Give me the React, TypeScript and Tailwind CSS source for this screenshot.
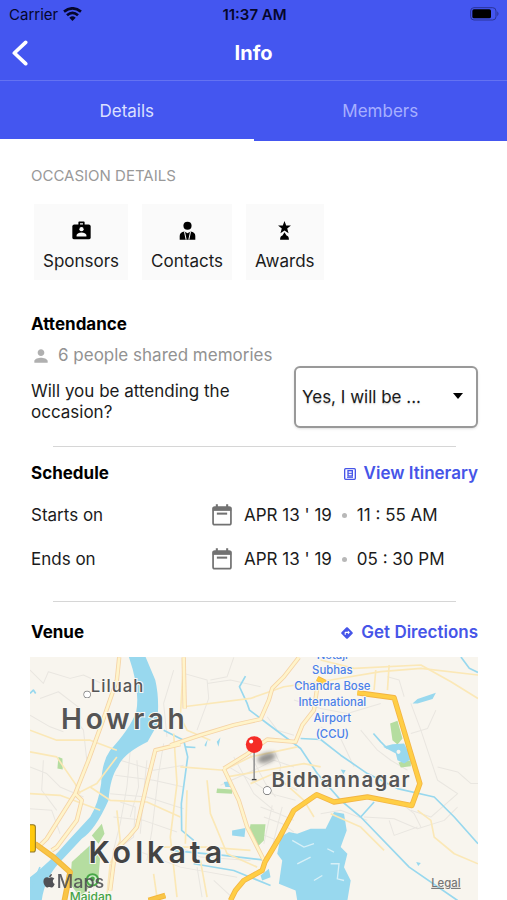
import type { ReactNode } from 'react';
import { MdDirections, MdPerson } from 'react-icons/md';
import { FaApple } from 'react-icons/fa';

const WifiIcon = () => (
  <svg viewBox="0 0 57 42" className="h-[14px] w-[19px]" fill="none" stroke="#05062b" strokeWidth="8" aria-hidden="true">
    <path d="M3 14Q28.500 -6 54 14" />
    <path d="M12 25Q28.500 10 45 25" />
    <path d="M19 32Q28.500 24 38 32L28.500 42Z" fill="#05062b" stroke="none" />
  </svg>
);

const BatteryIcon = () => (
  <svg viewBox="0 0 90 42" className="h-[14px] w-[30px]" aria-hidden="true">
    <rect x="2" y="2" width="76" height="37" rx="10" fill="none" stroke="#2a3499" strokeWidth="3" />
    <rect x="7" y="7" width="56" height="27" rx="5" fill="#000" />
    <path d="M82 13 Q89 20 82 28 Z" fill="#2a3499" />
  </svg>
);

const SponsorIcon = () => (
  <svg viewBox="0 0 58 56" className="h-[19px] w-[19px]" aria-hidden="true">
    <path d="M22 12V3H36V12" fill="none" stroke="#000" strokeWidth="5" strokeLinejoin="round" />
    <rect x="1" y="10" width="56" height="45" rx="6" />
    <circle cx="29" cy="24" r="6.500" fill="#fafafa" />
    <path d="M14 46V42Q17 34 29 34T44 42V46Z" fill="#fafafa" />
  </svg>
);

const ContactIcon = () => (
  <svg viewBox="0 0 56 56" className="h-[19px] w-[19px]" aria-hidden="true">
    <circle cx="28" cy="14" r="12" />
    <path d="M5 55V44Q5 33 19 31L28 36L37 31Q51 33 51 44V55Z" />
    <path d="M19 31L24 55M37 31L32 55" stroke="#fafafa" strokeWidth="3" />
  </svg>
);

const AwardIcon = () => (
  <svg viewBox="0 0 56 56" className="h-[19px] w-[19px]" aria-hidden="true">
    <path d="M28 0L33 13H47L36 22L40 36L28 28L16 36L20 22L9 13H23Z" />
    <path d="M28 33L34 43Q41 44 41 55H15Q15 44 22 43Z" />
  </svg>
);

const CalendarIcon = () => (
  <svg viewBox="0 0 58 64" className="h-[22px] w-[20px]" fill="none" stroke="#727272" aria-hidden="true">
    <rect x="3" y="9" width="52" height="51" rx="5" strokeWidth="5" />
    <path d="M2 15H56" strokeWidth="10" />
    <path d="M14 1V12M44 1V12" strokeWidth="6" />
    <path d="M14 28H44" strokeWidth="6" />
  </svg>
);

const ItineraryIcon = () => (
  <svg viewBox="0 0 36 36" className="h-3 w-3" fill="none" stroke="#4655e8" aria-hidden="true">
    <rect x="2" y="2" width="32" height="32" rx="3" strokeWidth="4" />
    <rect x="12" y="8" width="13" height="16" strokeWidth="4" />
    <path d="M12 16H25M9 28H27" strokeWidth="3" />
  </svg>
);

const minorRoads = [
  'M30 60L70 100L85 65L150 85L190 75L240 98M60 145L115 125L180 175M30 195L90 230L130 245',
  'M30 350L80 370L120 410L190 440M70 330L65 420L110 480M30 475L95 480L120 550M160 200L190 240L200 330',
  'M300 330L400 360L490 345M285 375L400 390L490 410M270 430L380 440L490 475M280 500L370 510L470 545',
  'M330 300L320 410L300 520L280 600M430 280L415 370L395 540L380 630M460 60L430 160L440 260',
  'M350 330L355 410L330 500M380 330L370 430L360 550M300 455L345 470L340 560L300 590',
  'M490 70L560 90L565 145L530 240M560 100L630 90L720 110M640 22L620 80L570 90M740 200L770 240L820 255',
  'M600 405L710 355L760 330L820 350M625 350L700 395L750 430L825 450M640 320L700 430L760 480M680 295L735 400L765 440',
  'M760 300L780 345L775 390L830 420M720 470L775 490L820 510M730 500L785 520L820 545M720 550L770 570M755 465L730 580M785 470L755 590M810 480L775 610',
  'M1020 240L1070 300L1110 330L1160 360M1100 80L1135 90L1150 140M1170 160L1200 240L1250 390L1310 430L1230 500L1170 480',
  'M1245 180L1220 235L1170 250M1250 350L1310 365L1350 400H1371M1030 500L1120 505L1190 535L1270 510L1310 470M1105 510L1120 555L1190 530M1130 450L1180 490L1200 530',
  'M900 490L960 480L1040 510M880 650L850 600L790 570M480 590L540 620L690 630M530 650L545 740M580 690L640 745',
  'M820 150L900 175L980 190L1080 160M900 230L960 265L1000 350M180 610L230 640L220 720M350 600L480 650L650 680',
];

const localRoads = [
  'M30 240L110 270L210 270L290 300',
  'M30 305L110 320L165 400L180 430',
  'M30 430L120 435L240 480',
  'M210 410L270 450L380 455L480 500',
  'M170 430L230 400L290 320',
  'M490 170L690 145L790 110L930 90L1080 65L1200 55L1371 75',
  'M900 30L1000 55L1200 45L1290 95L1371 145',
  'M1065 60L1060 120M1105 45L1100 120',
  'M480 350L610 360L690 320L830 290M620 380L850 340L900 350',
  'M560 390L570 490L620 610L710 650',
  'M460 250L470 400L450 560L470 740',
  'M290 480L300 570L270 640L260 740',
  'M430 590L560 590L690 600',
  'M690 400L760 370L850 450L880 500',
  'M1190 480L1230 510L1240 560L1300 610L1371 640',
  'M490 22L480 200L500 240L570 270',
  'M930 490L1020 530L1090 600',
  'M500 420L495 580M540 630L560 740M400 670L410 740',
];

const highways = [
  'M297 22L290 90L245 220L205 330L165 430L80 565L55 590',
  'M165 430L185 450L170 510L110 590L95 600',
  'M450 285L540 255L640 225L720 207L745 150L755 115L790 80L835 22',
  'M490 22L493 175',
  'M480 282L405 300L380 400L350 530L325 560L285 600L270 720',
  'M610 355L675 315L740 268L825 275L845 225L880 180L890 110',
  'M610 355L655 450L680 530L733 635',
];

const tollRoad = 'M733 635L775 565L820 480L888 433L940 455L1040 440L1173 466L1197 400L1120 143L1010 128M890 85L915 98M733 635L725 660L670 690L645 720L630 750';

const OccasionMap = () => (
  <svg viewBox="30 21 1341 729" className="block h-auto w-full bg-[#f8f5ee] font-['Inter',sans-serif]" role="img" aria-label="Map of the venue near Bidhannagar">
    <g fill="none" stroke="#e9e6e0" strokeWidth="3" strokeLinejoin="round">
      {minorRoads.map((d) => <path key={d} d={d} />)}
    </g>

    {/* parks */}
    <g fill="#b5dda0">
      <path d="M115 320L127 325L128 358L112 355Z" />
      <path d="M245 520L253 550L235 580L215 555ZM155 635L215 580L240 620L235 680L180 740L150 700Z" />
      <path d="M590 415L635 418V430L588 428ZM690 522H735L730 570L710 590L685 550Z" />
      <path d="M1108 220L1130 212L1145 265L1130 283L1115 270ZM1133 337L1170 330V348L1140 352Z" />
    </g>

    {/* rivers, canals and lakes */}
    <g fill="#98d8ee">
      <path d="M326 21H376L405 90Q419 150 410 225L382 275Q310 310 294 348Q270 380 265 450Q225 540 185 565L120 635Q75 680 65 750H30V680Q85 640 145 570L210 500Q235 460 243 400Q245 335 270 300Q330 235 348 185Q360 120 326 21Z" />
      <path d="M780 560L805 545L830 550L870 535L915 535L940 485L970 490L978 540L960 590L980 610L970 650L990 690L980 750H830L825 720L775 700L785 630L770 610Z" />
      <path d="M635 540L675 533L672 560L635 555ZM610 395L630 393L625 405L637 410H615ZM720 675L745 655L750 680L725 690Z" />
      <path d="M1087 290L1115 282L1150 280L1173 325L1150 340L1130 330L1125 310Z" />
      <path d="M1175 160L1190 147L1245 128L1235 147L1190 160ZM1186 635L1200 638L1192 647ZM960 358L975 360L968 372Z" />
      <path d="M552 285L562 267L557 290ZM589 275L600 262L594 290Z" />
    </g>
    <g fill="none" stroke="#98d8ee" strokeWidth="5" strokeLinejoin="round">
      <path d="M675 78L657 110L680 160L687 180L740 220L840 295L890 370L960 450L1020 500L1165 650L1310 750" />
      <path d="M430 240L490 270L502 320L483 460L484 540L520 570" />
      <path d="M840 265L900 268L960 315L1040 370L1130 415L1240 440L1300 500L1371 580" />
      <path d="M1058 250L1080 275L1100 295M1060 455L1020 500M1320 21L1345 55L1371 67" />
      <path d="M450 600L610 615L740 630M520 640L640 660L750 705M495 290L525 292M30 130L40 120L47 130M30 720L60 650" />
    </g>
    <path d="M815 570L850 590L880 580M830 640L870 620M920 595L940 605M930 640L955 640L950 685L970 690M880 690L905 675" fill="none" stroke="#d8f0f7" strokeWidth="4" />
    <circle cx="1133" cy="305" r="6" fill="#f8f5ee" />

    <g fill="none" stroke="#fbe8b7" strokeWidth="5" strokeLinejoin="round">
      {localRoads.map((d) => <path key={d} d={d} />)}
    </g>
    <g fill="none" stroke="#f5d3a6" strokeWidth="13" strokeLinejoin="round">
      {highways.map((d) => <path key={d} d={d} />)}
    </g>
    <g fill="none" stroke="#fff4ca" strokeWidth="8" strokeLinejoin="round">
      {highways.map((d) => <path key={d} d={d} />)}
    </g>
    <g fill="none" strokeLinejoin="round">
      <path d={tollRoad} stroke="#f3b544" strokeWidth="16" />
      <path d={tollRoad} stroke="#ffce45" strokeWidth="11" />
      <path d="M45 580L100 620L150 665L133 750M385 750L435 735" stroke="#f3b73d" strokeWidth="17" />
      <path d="M45 580L100 620L150 665L133 750M385 750L435 735" stroke="#f9c546" strokeWidth="11" />
    </g>
    <path d="M28 523H39Q46 523 46 530V598Q46 605 39 605H28Z" fill="#ffc90b" stroke="#8c7524" strokeWidth="3" />

    {/* place names */}
    <g fill="#555" stroke="#faf8f3" strokeWidth="6" paintOrder="stroke" fontWeight="600">
      <circle cx="201" cy="133" r="9" fill="#fff" stroke="#777" strokeWidth="4" />
      <text x="212" y="125" fontSize="50" fontWeight="500" letterSpacing="3">Liluah</text>
      <text x="123" y="237" fontSize="84" letterSpacing="11">Howrah</text>
      <circle cx="740" cy="421" r="11" fill="#fff" stroke="#666" strokeWidth="4" />
      <text x="753" y="410" fontSize="61" letterSpacing="4">Bidhannagar</text>
      <text x="205" y="638" fontSize="91" fill="#444" letterSpacing="12">Kolkata</text>
    </g>
    <g fill="#4b80e8" stroke="#faf8f3" strokeWidth="5" paintOrder="stroke" fontSize="34" fontWeight="500" textAnchor="middle">
      <text x="935" y="26">Netaji</text>
      <text x="935" y="73">Subhas</text>
      <text x="935" y="121">Chandra Bose</text>
      <text x="935" y="168">International</text>
      <text x="935" y="216">Airport</text>
      <text x="935" y="263">(CCU)</text>
    </g>
    <circle cx="217" cy="688" r="17" fill="#d6efd0" stroke="#48a847" strokeWidth="6" />
    <circle cx="217" cy="685" r="7" fill="#48a847" />
    <text x="149" y="750" fontSize="36" fontWeight="500" fill="#45a345" stroke="#faf8f3" strokeWidth="5" paintOrder="stroke">Maidan</text>

    {/* venue pin */}
    <defs>
      <filter id="pin-shadow" x="-50%" y="-50%" width="200%" height="200%">
        <feGaussianBlur stdDeviation="7" />
      </filter>
    </defs>
    <ellipse cx="738" cy="323" rx="28" ry="14" fill="#444" opacity=".55" transform="rotate(-18 738 323)" filter="url(#pin-shadow)" />
    <path d="M701 305V387" stroke="#999" strokeWidth="5" />
    <path d="M694 388H708" stroke="#444" strokeWidth="4" />
    <circle cx="701" cy="283" r="25" fill="#f52c26" />
    <circle cx="692" cy="274" r="6" fill="#fff" />

    <FaApple x="64" y="668" size="46" fill="#505054" />
    <text x="110" y="711" fontSize="54" fontWeight="500" fill="#505054" opacity=".9">Maps</text>
    <a href="#legal">
      <text x="1231" y="709" fontSize="34" fontWeight="500" fill="#777" textDecoration="underline">Legal</text>
    </a>
  </svg>
);

const DetailButton = ({ icon, label }: { icon: ReactNode; label: string }) => (
  <button type="button" className="flex h-[76px] flex-col items-center gap-2 bg-[#fafafa] px-[9px] pt-[17px] text-[17px] leading-[26px]">
    {icon}
    <span>{label}</span>
  </button>
);

const ScheduleRow = ({ label, date, time }: { label: string; date: string; time: string }) => (
  <div className="flex h-11 items-center">
    <span className="w-[181px]">{label}</span>
    <CalendarIcon />
    <span className="ml-3">{date}</span>
    <span className="mx-[10px] h-[5px] w-[5px] rounded-full bg-[#b8b8b8]" />
    <span>{time}</span>
  </div>
);

export default function App() {
  return (
    <div className="bg-white font-['Inter',sans-serif] text-[17px] leading-[21px] text-[#1b1b1b]">
      <header className="bg-[#4456f0]">
        <div className="grid h-7 grid-cols-3 items-center pr-[7px] pl-[9px] text-[15px] text-[#05062b]">
          <div className="flex items-center gap-[5px]">
            <span>Carrier</span>
            <WifiIcon />
          </div>
          <span className="text-center font-semibold">11:37 AM</span>
          <div className="flex justify-end"><BatteryIcon /></div>
        </div>
        <div className="grid h-[53px] grid-cols-3 items-center border-b border-[#6472f2] px-3 pb-[2px]">
          <button type="button" aria-label="Back" className="w-4">
            <svg viewBox="0 0 48 78" className="h-[26px] w-4" fill="none" stroke="#fff" strokeWidth="11" strokeLinecap="round" strokeLinejoin="round">
              <path d="M41 7L7 39L41 71" />
            </svg>
          </button>
          <h1 className="text-center text-[20px] font-bold text-white">Info</h1>
        </div>
        <nav className="grid h-[60px] grid-cols-2">
          <button type="button" className="border-b-2 border-white pt-[2px] text-[#dce0ff]">Details</button>
          <button type="button" className="border-b-2 border-transparent pt-[2px] text-[#a7afff]">Members</button>
        </nav>
      </header>

      <main className="pt-6">
        <div className="pr-[29px] pl-[31px]">
          <h2 className="text-[15px] text-[#999]">OCCASION DETAILS</h2>
          <div className="mt-[18px] flex gap-[14px] pl-[3px]">
            <DetailButton icon={<SponsorIcon />} label="Sponsors" />
            <DetailButton icon={<ContactIcon />} label="Contacts" />
            <DetailButton icon={<AwardIcon />} label="Awards" />
          </div>

          <section className="pt-[34px]">
            <h2 className="font-bold text-black">Attendance</h2>
            <p className="mt-[10px] flex items-center gap-[7px] text-[#929292]">
              <MdPerson className="h-5 w-5 text-[#b0b0b0]" />
              6 people shared memories
            </p>
            <div className="flex items-center justify-between">
              <label htmlFor="attending" className="w-[220px] pt-[9px]">Will you be attending the occasion?</label>
              <div className="relative">
                <select id="attending" className="h-[62px] w-[184px] appearance-none rounded-md border-2 border-[#999] bg-white pl-[6px] shadow-sm text-shadow-sm">
                  <option>Yes, I will be ...</option>
                  <option>No</option>
                </select>
                <svg viewBox="0 0 10 6" className="pointer-events-none absolute top-[27px] right-[15px] h-[6px] w-[10px]" aria-hidden="true">
                  <path d="M0 0H10L5 6Z" />
                </svg>
              </div>
            </div>
          </section>

          <hr className="mx-[22px] mt-[18px] border-[#d6d6d6]" />
          <section className="pt-4">
            <div className="mb-[9px] flex items-center justify-between">
              <h2 className="font-bold text-black">Schedule</h2>
              <a href="#itinerary" className="flex items-center gap-2 font-semibold text-[#4655e8]">
                <ItineraryIcon />
                View Itinerary
              </a>
            </div>
            <ScheduleRow label="Starts on" date="APR 13 ' 19" time="11 : 55 AM" />
            <ScheduleRow label="Ends on" date="APR 13 ' 19" time="05 : 30 PM" />
          </section>

          <hr className="mx-[22px] mt-5 border-[#d6d6d6]" />
          <section className="flex items-center justify-between pt-5 pb-[14px]">
            <h2 className="font-bold text-black">Venue</h2>
            <a href="#directions" className="flex items-center gap-[7px] font-semibold text-[#4655e8]">
              <MdDirections className="h-[14px] w-[14px]" />
              Get Directions
            </a>
          </section>
        </div>
        <div className="pr-[29px] pl-[30px]">
          <OccasionMap />
        </div>
      </main>
    </div>
  );
}
